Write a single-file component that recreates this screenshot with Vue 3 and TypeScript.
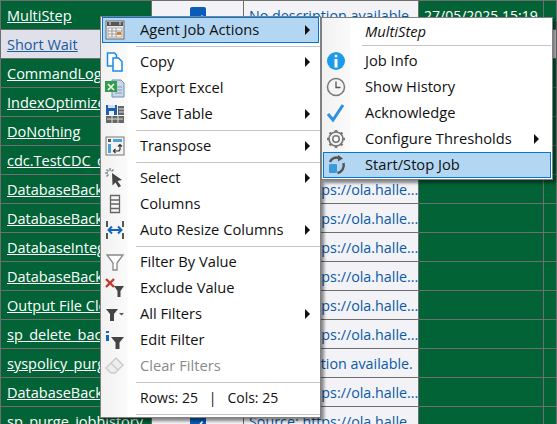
<script setup lang="ts">
interface Row {
  name: string
  desc?: string
  date?: string
  check?: boolean
}

const rows: Row[] = [
  { name: 'MultiStep', desc: 'No description available.', date: '27/05/2025 15:19', check: true },
  { name: 'Short Wait' },
  { name: 'CommandLog Cleanup' },
  { name: 'IndexOptimize - USER' },
  { name: 'DoNothing' },
  { name: 'cdc.TestCDC_capture' },
  { name: 'DatabaseBackup - SYS', desc: 'Source: https://ola.halle...' },
  { name: 'DatabaseBackup - USER', desc: 'Source: https://ola.halle...' },
  { name: 'DatabaseIntegrityCheck', desc: 'Source: https://ola.halle...' },
  { name: 'DatabaseBackup - LOG', desc: 'Source: https://ola.halle...' },
  { name: 'Output File Cleanup', desc: 'Source: https://ola.halle...' },
  { name: 'sp_delete_backuphistory', desc: 'Source: https://ola.halle...' },
  { name: 'syspolicy_purge_history', desc: 'No description available.' },
  { name: 'DatabaseBackup - FULL', desc: 'Source: https://ola.halle...' },
  { name: 'sp_purge_jobhistory', desc: 'Source: https://ola.halle...', check: true },
]

interface Item {
  label?: string
  icon?: string
  arrow?: boolean
  active?: boolean
  disabled?: boolean
  counts?: boolean
}

const mainItems: Item[] = [
  { label: 'Agent Job Actions', icon: 'calendar', arrow: true, active: true },
  {},
  { label: 'Copy', icon: 'copy', arrow: true },
  { label: 'Export Excel', icon: 'excel' },
  { label: 'Save Table', icon: 'save', arrow: true },
  {},
  { label: 'Transpose', icon: 'transpose', arrow: true },
  {},
  { label: 'Select', icon: 'select', arrow: true },
  { label: 'Columns', icon: 'columns' },
  { label: 'Auto Resize Columns', icon: 'resize', arrow: true },
  {},
  { label: 'Filter By Value', icon: 'funnel' },
  { label: 'Exclude Value', icon: 'exclude' },
  { label: 'All Filters', icon: 'allfilters', arrow: true },
  { label: 'Edit Filter', icon: 'editfilter' },
  { label: 'Clear Filters', icon: 'eraser', disabled: true },
  {},
  { label: 'Rows: 25 \u00a0 | \u00a0 Cols: 25', counts: true },
  {},
]

const subItems: Item[] = [
  { label: 'Job Info', icon: 'info' },
  { label: 'Show History', icon: 'clock' },
  { label: 'Acknowledge', icon: 'check' },
  { label: 'Configure Thresholds', icon: 'gear', arrow: true },
  { label: 'Start/Stop Job', icon: 'startstop', active: true },
]
</script>

<template>
  <div class="page">
    <div class="grid">
      <div v-for="(row, i) in rows" :key="i" class="row" :class="{ selected: i === 1 }">
        <div class="cell name"><span>{{ row.name }}</span></div>
        <div class="cell flag">
          <span v-if="row.check" class="box">
            <svg viewBox="0 0 16 16" width="16" height="16"><path d="M3.5 8.5l3 3 6-7" fill="none" stroke="#fff" stroke-width="1.6" /></svg>
          </span>
        </div>
        <div class="cell desc">{{ row.desc }}</div>
        <div class="cell date">{{ row.date }}</div>
        <div class="cell rest"></div>
      </div>
    </div>

    <div class="menu main-menu">
      <template v-for="(item, i) in mainItems" :key="i">
        <div v-if="!item.label" class="sep"></div>
        <div v-else class="item" :class="{ active: item.active, disabled: item.disabled, counts: item.counts }">
          <span class="ico">
            <svg v-if="item.icon" viewBox="0 0 20 20" width="20" height="20">
              <template v-if="item.icon === 'calendar'">
                <rect x="1" y="1" width="18" height="18" fill="#e8e8e8" stroke="#6b6b6b" />
                <rect x="2" y="2" width="16" height="4" fill="#555" />
                <path d="M5 2v3M15 2v3" stroke="#eee" />
                <path d="M3 8h14v9H3z" fill="#f5f5f5" stroke="#888" stroke-width=".6" />
                <path d="M3 11h14M3 14h14M7 8v9M11 8v9" stroke="#888" stroke-width=".8" />
                <rect x="12" y="12" width="4" height="3" fill="#d9822b" />
              </template>
              <template v-else-if="item.icon === 'copy'">
                <path d="M2.500 1h7l2 2v11h-9z" fill="#fff" stroke="#1e88e5" stroke-width="1.500" />
                <path d="M8 6h5.500l3.500 3.500V19H8z" fill="#fff" stroke="#1e88e5" stroke-width="1.500" />
              </template>
              <template v-else-if="item.icon === 'excel'">
                <path d="M7 2h9l3 3v14H7z" fill="#c9d7e6" stroke="#6f8fae" />
                <path d="M10 9h7M10 12h7M10 15h7" stroke="#7f9dbb" />
                <rect x="0" y="3" width="12" height="11" fill="#2e9e4a" />
                <path d="M3 6l6 6M9 6l-6 6" stroke="#fff" stroke-width="1.600" />
              </template>
              <template v-else-if="item.icon === 'save'">
                <rect x="1" y="1" width="11" height="10" fill="#1c5fb0" />
                <rect x="3" y="1" width="7" height="3" fill="#cfe0f5" />
                <rect x="4" y="7" width="5" height="4" fill="#eef" />
                <rect x="1" y="12" width="18" height="7" fill="#666" />
                <rect x="13" y="2" width="6" height="9" fill="#666" />
                <path d="M2 15h16M7 12v7M13 12v7M14 5h5M14 8h5" stroke="#ddd" />
              </template>
              <template v-else-if="item.icon === 'transpose'">
                <rect x="1" y="1" width="18" height="18" fill="#f2f2f2" stroke="#777" />
                <rect x="3" y="3" width="3" height="3" fill="#555" />
                <rect x="8" y="3" width="9" height="3" fill="#4da3d8" />
                <rect x="3" y="8" width="3" height="9" fill="#4da3d8" />
                <path d="M9 15h4a2 2 0 0 0 2-2V9M13 10.500l2-2 2 2M10.500 13l-2 2 2 2" fill="none" stroke="#333" stroke-width="1.200" />
              </template>
              <template v-else-if="item.icon === 'select'">
                <path d="M7 5l10 7-4.500 1 3.500 5-2.500 1.500-3-5-3 3z" fill="#444" />
                <path d="M5 0v3M0 5h3M1.500 1.500l2 2M8.500 1.500l-2 2M1.500 8.500l2-2" stroke="#888" stroke-width="1.500" />
              </template>
              <template v-else-if="item.icon === 'columns'">
                <path d="M5.500 1.500h9v17h-9zM5.500 6h9M5.500 10h9M5.500 14.500h9" fill="none" stroke="#666" stroke-width="1.300" />
              </template>
              <template v-else-if="item.icon === 'resize'">
                <path d="M2 1v6M2 13v6M18 1v6M18 13v6" stroke="#444" stroke-width="1.800" />
                <path d="M4 10h12" stroke="#1565c0" stroke-width="2" />
                <path d="M7 6.500L3.500 10 7 13.500M13 6.500l3.500 3.500-3.500 3.500" fill="none" stroke="#1565c0" stroke-width="2" />
              </template>
              <template v-else-if="item.icon === 'funnel'">
                <path d="M2 3h16l-6 8v7h-4v-7z" fill="#fff" stroke="#888" stroke-width="1.300" />
              </template>
              <template v-else-if="item.icon === 'exclude'">
                <path d="M1 1l8 8M9 1L1 9" stroke="#c0392b" stroke-width="2.400" />
                <path d="M9 8h10l-3.500 5v6h-3v-6z" fill="#444" />
              </template>
              <template v-else-if="item.icon === 'allfilters'">
                <path d="M1 5h12l-4 5v7H5v-7z" fill="#444" />
                <path d="M14 9h5l-2.500 2.500z" fill="#555" />
              </template>
              <template v-else-if="item.icon === 'editfilter'">
                <path d="M1 1h3v2H1zM1 5h3v6H1z" fill="#1565c0" />
                <path d="M6 7h13l-4.500 5.500V19h-4v-6.500z" fill="#444" />
              </template>
              <template v-else-if="item.icon === 'eraser'">
                <path d="M11 2l7 7-8 8H6l-5-5z" fill="#eee" stroke="#ccc" stroke-width="1.500" />
                <path d="M6 7l7 7" stroke="#ccc" stroke-width="1.500" />
              </template>
            </svg>
          </span>
          <span class="txt">{{ item.label }}</span>
          <span v-if="item.arrow" class="arrow"></span>
        </div>
      </template>
    </div>

    <div class="menu sub-menu">
      <div class="item head"><span class="ico"></span><span class="txt">MultiStep</span></div>
      <div class="sep"></div>
      <div v-for="item in subItems" :key="item.label" class="item" :class="{ active: item.active }">
        <span class="ico">
          <svg viewBox="0 0 20 20" width="20" height="20">
            <template v-if="item.icon === 'info'">
              <circle cx="10" cy="10" r="9" fill="#1e9be8" />
              <rect x="8.500" y="3.500" width="3" height="3" rx="1.500" fill="#fff" />
              <rect x="8.500" y="8" width="3" height="8.500" fill="#fff" />
            </template>
            <template v-else-if="item.icon === 'clock'">
              <circle cx="10" cy="10" r="8.500" fill="#f4f4f4" stroke="#777" stroke-width="1.500" />
              <path d="M10 4.500V10.500H14.500" fill="none" stroke="#555" stroke-width="1.300" />
            </template>
            <template v-else-if="item.icon === 'check'">
              <path d="M2 11l5 6L17 2" fill="none" stroke="#2f8fe0" stroke-width="3" />
            </template>
            <template v-else-if="item.icon === 'gear'">
              <circle cx="10" cy="10" r="7" fill="#f1f1f1" stroke="#777" stroke-width="1.600" />
              <circle cx="10" cy="10" r="3.200" fill="#fff" stroke="#777" stroke-width="1.500" />
              <path d="M10 1v2.500M10 16.500V19M1 10h2.500M16.500 10H19M3.600 3.600l1.800 1.800M14.600 14.600l1.800 1.800M3.600 16.400l1.800-1.800M14.600 5.400l1.800-1.800" stroke="#777" stroke-width="2.600" />
            </template>
            <template v-else>
              <path d="M4 7a7 7 0 0 1 9-4" fill="none" stroke="#555" stroke-width="2.500" />
              <path d="M12 0l5 3.500-5 3z" fill="#555" />
              <path d="M17.500 8a8 8 0 0 1-6 10" fill="none" stroke="#555" stroke-width="2.500" />
              <rect x="3" y="9" width="8" height="9" rx="1" fill="#3d9ad9" />
            </template>
          </svg>
        </span>
        <span class="txt">{{ item.label }}</span>
        <span v-if="item.arrow" class="arrow"></span>
      </div>
    </div>
  </div>
</template>

<style>
html, body {
  margin: 0;
  overflow: hidden;
}
</style>

<style scoped>
.page {
  position: relative;
  width: 557px;
  height: 424px;
  overflow: hidden;
  font-family: "Open Sans", "Noto Sans", sans-serif;
  font-size: 14.5px;
  background: #fff;
}

.grid {
  border-top: 1px solid #6e6e6e;
}

.row {
  display: grid;
  grid-template-columns: 152px 92px 175px 125px 1fr;
  height: 29px;
  box-sizing: border-box;
  border-bottom: 1px solid #6e6e6e;
}

.cell {
  box-sizing: border-box;
  border-right: 1px solid #6e6e6e;
  background: #026336;
  color: #fff;
  white-space: nowrap;
  overflow: hidden;
  line-height: 29px;
}

.name {
  padding-left: 6px;
  border-left: 1px solid #6e6e6e;
  text-decoration: underline;
}

.flag,
.desc {
  background: #f2f2f7;
}

.flag {
  display: flex;
  justify-content: center;
}

.box {
  margin-top: 6px;
  width: 16px;
  height: 16px;
  border-radius: 2px;
  background: #0a5cb8;
}

.desc {
  padding-left: 5px;
  font-size: 14.3px;
  color: #0b5aa5;
}

.date {
  padding-left: 5px;
  font-size: 14px;
}

.selected .cell {
  background: #e0e0ea;
  color: #1a5a9e;
}

.menu {
  position: absolute;
  box-sizing: border-box;
  background: #fff;
  border: 1px solid #808080;
  box-shadow: 3px 3px 3px rgba(0, 0, 0, 0.45);
  color: #111;
  font-size: 14.7px;
}

.main-menu {
  left: 100px;
  top: 16px;
  width: 221px;
  height: 402px;
  background: linear-gradient(90deg, #f1f1f1, #fafafa 26px, #fff 27px);
}

.sub-menu {
  left: 321px;
  top: 17px;
  width: 232px;
  height: 163px;
  background: linear-gradient(90deg, #f1f1f1, #fafafa 28px, #fff 29px);
}

.item {
  position: relative;
  display: flex;
  align-items: center;
  box-sizing: border-box;
  height: 26px;
  border: 1px solid transparent;
  margin: 0 1px;
}

.item.active {
  background: #b3d7f3;
  border-color: #0078d4;
}

.item.disabled {
  color: #8a8a8a;
}

.item.counts {
  font-size: 14px;
}

.txt {
  margin-top: -2px;
}

.ico {
  width: 24px;
  flex: none;
  display: flex;
  justify-content: center;
  margin-right: 13px;
}

.sub-menu .ico {
  margin-right: 17px;
}

.head {
  height: 24px;
  font-style: italic;
}

.head .txt {
  margin-top: 1px;
}

.sep {
  height: 6px;
  margin-left: 35px;
  background: linear-gradient(#c4c4c4, #c4c4c4) no-repeat 0 3px / 100% 1px;
}

.sub-menu .sep {
  margin-left: 40px;
  margin-right: 1px;
}

.arrow {
  position: absolute;
  right: 8px;
  top: 7px;
  border-left: 5px solid #111;
  border-top: 5px solid transparent;
  border-bottom: 5px solid transparent;
}

.sub-menu .arrow {
  right: 11px;
}
</style>
